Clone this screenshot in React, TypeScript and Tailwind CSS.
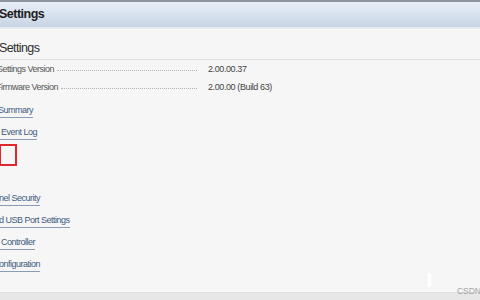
import React from "react";

const links: { text: string; pad?: string }[] = [
  { text: "Summary", pad: "ml-[-2px]" },
  { text: "Event Log", pad: "pl-[1px]" },
];

const links2: { text: string; pad?: string }[] = [
  { text: "nel Security", pad: "ml-[-1px]" },
  { text: "d USB Port Settings", pad: "ml-[-1px]" },
  { text: "Controller", pad: "pl-[1px]" },
  { text: "onfiguration", pad: "ml-[-1px]" },
];

function LinkRow({ text, pad }: { text: string; pad?: string }) {
  return (
    <div className="h-[22px] pt-[5px] flex items-start">
      <span
        className={`inline-block text-[9px] leading-[11px] tracking-[-0.5px] text-[#3d5a80] border-b border-[#8a9cb6] pb-[1px] ${pad ?? ""}`}
      >
        {text}
      </span>
    </div>
  );
}

function InfoRow({ label, value, labelClass }: { label: string; value: string; labelClass: string }) {
  return (
    <div className="h-[18px] flex items-center">
      <div className="w-[197px] flex items-center">
        <span className={`text-[9px] tracking-[-0.5px] text-[#555] whitespace-nowrap ${labelClass}`}>{label}</span>
        <div className="flex-1 ml-[3px] border-t border-dotted border-[#b4b4b4]" />
      </div>
      <span className="ml-[11px] text-[9px] tracking-[-0.4px] text-[#444] whitespace-nowrap">{value}</span>
    </div>
  );
}

export default function App() {
  return (
    <div className="relative w-[480px] h-[300px] overflow-hidden bg-[#f6f6f6] flex flex-col font-['Liberation_Sans',Arial,sans-serif]">
      <div className="h-[29px] shrink-0 border-t-2 border-[#8d949b] bg-gradient-to-b from-[#e8eff8] to-[#c8d4e4] border-b-2 border-b-[#e6ebf1] flex items-center">
        <span className="ml-[-1px] text-[12.5px] font-bold tracking-[-0.5px] text-[#1f1f1f]">Settings</span>
      </div>
      <div className="pt-[12px] pb-[4px] border-b border-[#dedede]">
        <span className="block ml-[-1px] text-[12.5px] leading-[14px] tracking-[-0.6px] text-[#2e2e2e]">Settings</span>
      </div>
      <div className="mt-[1px]">
        <InfoRow label="Settings Version" value="2.00.00.37" labelClass="ml-[-3px]" />
        <InfoRow label="Firmware Version" value="2.00.00 (Build 63)" labelClass="ml-[-4px]" />
      </div>
      <div className="mt-[3px]">
        {links.map((l) => (
          <LinkRow key={l.text} text={l.text} pad={l.pad} />
        ))}
        <div className="h-[22px]">
          <div className="ml-[-1px] w-[18px] h-[22px] border-2 border-[#e0282c]" />
        </div>
        <div className="h-[22px]" />
        {links2.map((l) => (
          <LinkRow key={l.text} text={l.text} pad={l.pad} />
        ))}
      </div>
      <div className="mt-auto h-[8px] bg-[#e7e7e7] border-t border-[#e0e0e0]" />
      <div className="absolute left-[428px] top-[273px] w-[3px] h-[14px] bg-white rounded-sm shadow-[0_0_2px_rgba(255,255,255,0.9)]" />
      <span className="absolute right-[-1px] top-[286px] text-[8.5px] leading-[10px] text-[#a3a3a3]">CSDN</span>
    </div>
  );
}
